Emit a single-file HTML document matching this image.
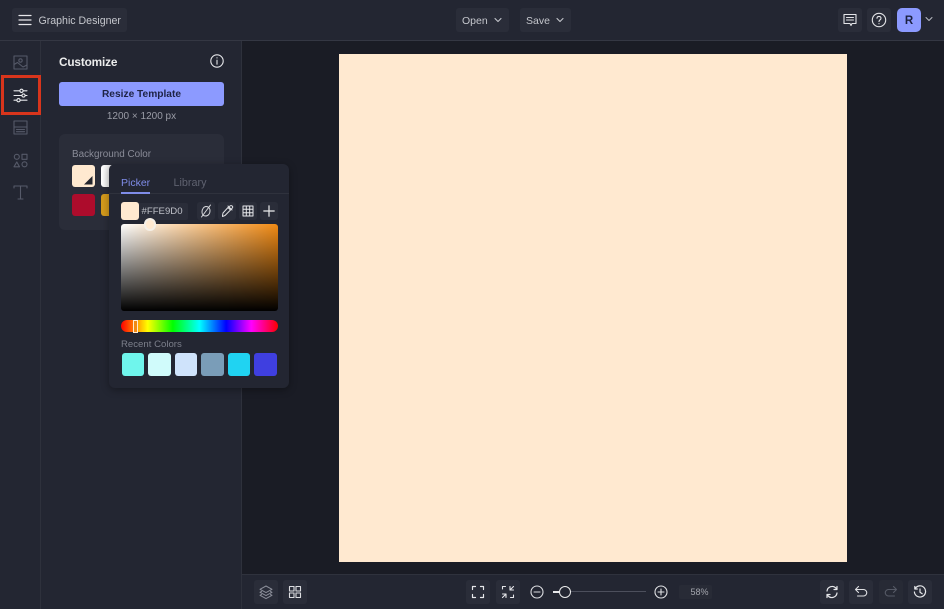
<!DOCTYPE html>
<html><head><meta charset="utf-8">
<style>
html,body{margin:0;padding:0;width:944px;height:609px;overflow:hidden;background:#1a1c25;font-family:"Liberation Sans","DejaVu Sans",sans-serif}
div,span,svg{position:absolute;box-sizing:border-box}
.t{white-space:nowrap;line-height:1}
.b{background:#2a2d39;border-radius:3px}
svg{fill:none;stroke-linecap:round;stroke-linejoin:round}
.sw{border-radius:3px}
</style></head><body>
<!-- bars -->
<div style="left:0;top:0;width:944px;height:41px;background:#232632;border-bottom:1px solid #343743"></div>
<div style="left:0;top:41px;width:41px;height:568px;background:#232632;border-right:1px solid #2e313c"></div>
<div style="left:41px;top:41px;width:201px;height:568px;background:#232632;border-right:1px solid #2e313c"></div>
<div style="left:242px;top:574px;width:702px;height:35px;background:#232632;border-top:1px solid #2f323d"></div>
<!-- canvas -->
<div style="left:338.5px;top:53.5px;width:508.5px;height:508.5px;background:#ffe9d0"></div>

<!-- top left -->
<div class="b" style="left:12px;top:8px;width:115px;height:24px"></div>
<svg style="left:17.5px;top:13px" width="14" height="14" viewBox="0 0 14 14" stroke="#e6e7ea" stroke-width="1.2"><path d="M1 2.5H13M1 7H13M1 11.5H13"/></svg>
<div class="t" style="left:38.5px;top:15.5px;font-size:10.6px;color:#c5c7cd">Graphic Designer</div>
<!-- top centre -->
<div class="b" style="left:456px;top:8px;width:53px;height:24px"></div>
<div class="t" style="left:462px;top:15.5px;font-size:10.5px;color:#c5c7cd">Open</div>
<svg style="left:494px;top:17px" width="8" height="6" viewBox="0 0 8 6" stroke="#c5c7cd" stroke-width="1.1"><path d="M1 1.5L4 4.5L7 1.5"/></svg>
<div class="b" style="left:520px;top:8px;width:51px;height:24px"></div>
<div class="t" style="left:526px;top:15.5px;font-size:10.5px;color:#c5c7cd">Save</div>
<svg style="left:556px;top:17px" width="8" height="6" viewBox="0 0 8 6" stroke="#c5c7cd" stroke-width="1.1"><path d="M1 1.5L4 4.5L7 1.5"/></svg>
<!-- top right -->
<div class="b" style="left:838px;top:8px;width:24px;height:24px"></div>
<svg style="left:842px;top:12px" width="16" height="16" viewBox="0 0 16 16" stroke="#e4e5e8" stroke-width="1.1"><path d="M2 2.5H14V11.5H10L9 13.5L8 11.5H2Z"/><path d="M4.5 5.5H11.5M4.5 8H11.5"/></svg>
<div class="b" style="left:867px;top:8px;width:24px;height:24px"></div>
<svg style="left:871px;top:12px" width="16" height="16" viewBox="0 0 16 16" stroke="#e4e5e8" stroke-width="1.1"><circle cx="8" cy="8" r="6.7"/><path d="M6 6.3C6 3.8 10 3.8 10 6.2C10 7.8 8 7.8 8 9.6M8 11.6V11.8"/></svg>
<div style="left:897px;top:8px;width:24px;height:24px;background:#8c9aff;border-radius:5px"></div>
<div class="t" style="left:897px;top:15.5px;width:24px;text-align:center;font-size:11.5px;font-weight:bold;color:#1c2140">R</div>
<svg style="left:925px;top:16px" width="8" height="6" viewBox="0 0 8 6" stroke="#b9bbc2" stroke-width="1"><path d="M1 1.5L4 4.5L7 1.5"/></svg>

<!-- rail -->
<svg style="left:13px;top:55px" width="15" height="15" viewBox="0 0 15 15" stroke="#565a69" stroke-width="1.1"><rect x="1" y="1" width="13" height="13"/><circle cx="7.5" cy="5.5" r="1.7"/><path d="M1 9.5L4.5 7.5L10 12L14 10"/></svg>
<div style="left:1px;top:75px;width:40px;height:40px;border:3px solid #d8351c"></div>
<svg style="left:13px;top:88px" width="15" height="15" viewBox="0 0 15 15" stroke="#e8e9ec" stroke-width="1.1"><path d="M1 2.8H14M1 7.5H14M1 12.2H14"/><circle cx="8.5" cy="2.8" r="1.6" fill="#232632"/><circle cx="10.5" cy="7.5" r="1.6" fill="#232632"/><circle cx="5.5" cy="12.2" r="1.6" fill="#232632"/></svg>
<svg style="left:13px;top:120px" width="15" height="15" viewBox="0 0 15 15" stroke="#565a69" stroke-width="1.1"><rect x="1" y="1" width="13" height="13"/><path d="M1 7H14M3.5 9.5H11.5M3.5 11.7H11.5"/></svg>
<svg style="left:13px;top:153px" width="15" height="15" viewBox="0 0 15 15" stroke="#565a69" stroke-width="1.1"><circle cx="3.8" cy="3.8" r="2.5"/><rect x="9" y="1.3" width="5" height="5"/><path d="M3.8 9L6.5 13.8H1Z"/><circle cx="11.5" cy="11.3" r="2.5"/></svg>
<svg style="left:12px;top:184px" width="17" height="17" viewBox="0 0 17 17" stroke="#565a69" stroke-width="1.1"><path d="M2 4V2H15V4M8.5 2V15M6 15H11"/></svg>

<!-- panel -->
<div class="t" style="left:59px;top:57px;font-size:11.8px;letter-spacing:-.15px;font-weight:bold;color:#eceded">Customize</div>
<svg style="left:210px;top:54px" width="14" height="14" viewBox="0 0 14 14" stroke="#e6e7ea" stroke-width="1.1"><circle cx="7" cy="7" r="6.2"/><path d="M7 6.2V10.2M7 3.8V4"/></svg>
<div style="left:59px;top:82px;width:165px;height:24px;background:#8c9aff;border-radius:3px"></div>
<div class="t" style="left:59px;top:90px;width:165px;text-align:center;font-size:10.2px;font-weight:bold;color:#1e2345">Resize Template</div>
<div class="t" style="left:59px;top:112px;width:165px;text-align:center;font-size:10px;color:#9a9ca6">1200 × 1200 px</div>
<div style="left:59px;top:134px;width:165px;height:96px;background:#2a2d39;border-radius:6px"></div>
<div class="t" style="left:72px;top:150px;font-size:9.9px;color:#8a8c98">Background Color</div>
<div class="sw" style="left:72px;top:165px;width:23px;height:22px;background:#ffe9d0"></div>
<svg style="left:83px;top:175px" width="10" height="10" viewBox="0 0 10 10"><path d="M1 9.5L9.5 1V9.5Z" fill="#24262e"/></svg>
<div class="sw" style="left:101px;top:165px;width:23px;height:22px;background:linear-gradient(90deg,#fff,#c9c9c9)"></div>
<div class="sw" style="left:72px;top:194px;width:23px;height:22px;background:#ad0c2c"></div>
<div class="sw" style="left:101px;top:194px;width:23px;height:22px;background:#d39a1c"></div>

<!-- popover -->
<div style="left:109px;top:164px;width:180px;height:224px;background:#232632;border-radius:6px;box-shadow:0 2px 8px rgba(0,0,0,.35)"></div>
<div style="left:109px;top:193px;width:180px;height:1px;background:#2f323d"></div>
<div class="t" style="left:121px;top:177.5px;font-size:10.5px;color:#7f8ce8">Picker</div>
<div style="left:121px;top:192px;width:29px;height:1.5px;background:#7f8ce8"></div>
<div class="t" style="left:173.5px;top:177.5px;font-size:10.8px;color:#5f6270">Library</div>
<div style="left:121px;top:203px;width:67px;height:17px;background:#2a2d39;border-radius:2px"></div>
<div class="sw" style="left:121px;top:202px;width:18px;height:18px;background:#ffe9d0"></div>
<div class="t" style="left:141.5px;top:207px;font-size:9.6px;color:#bfc1c8">#FFE9D0</div>
<div class="b" style="left:197px;top:202px;width:18px;height:18px"></div>
<svg style="left:199px;top:204px" width="14" height="14" viewBox="0 0 14 14" stroke="#d9dade" stroke-width="1"><path d="M7 2.5C10 2.5 11 5 11 7C11 10 9 12 6.5 12C4 12 3 10 3 8C3 5 5 2.5 7 2.5ZM2.5 13L11.5 1"/></svg>
<div class="b" style="left:218px;top:202px;width:18px;height:18px"></div>
<svg style="left:220px;top:204px" width="14" height="14" viewBox="0 0 14 14" stroke="#e0e1e4" stroke-width="1"><path d="M8 3.5L10.5 6L5 11.5L2.5 12.5L2.5 11.5L3 9ZM8 2L12 6M9.5 2.5C10.5 1 12.5 1.5 12.8 3C12.5 4 12 4.5 11.5 5"/></svg>
<div class="b" style="left:239px;top:202px;width:18px;height:18px"></div>
<svg style="left:241px;top:204px" width="14" height="14" viewBox="0 0 14 14" stroke="#e6e7ea" stroke-width="1"><rect x="2" y="2" width="10" height="10"/><path d="M5.3 2V12M8.7 2V12M2 5.3H12M2 8.7H12"/></svg>
<div class="b" style="left:260px;top:202px;width:18px;height:18px"></div>
<svg style="left:261.5px;top:204px" width="14" height="14" viewBox="0 0 14 14" stroke="#eceded" stroke-width="1.2"><path d="M7 1.8V12.2M1.8 7H12.2"/></svg>
<!-- gradient -->
<div style="left:121px;top:224px;width:156.5px;height:87px;border-radius:3px;background:linear-gradient(180deg,rgba(0,0,0,0) 0%,#000 100%),linear-gradient(90deg,#fff 0%,#f08a14 100%)"></div>
<div style="left:143.5px;top:218px;width:12.5px;height:12.5px;border-radius:50%;background:#ffe9d0;border:2px solid #f5efe6"></div>
<!-- hue -->
<div style="left:121px;top:320px;width:156.5px;height:12px;border-radius:6px;background:linear-gradient(90deg,#f00 0%,#ff0 17%,#0f0 33%,#0ff 50%,#00f 67%,#f0f 83%,#f00 100%)"></div>
<div style="left:133px;top:319.5px;width:5px;height:13px;background:#f08a14;border:1px solid #ffe9d0"></div>
<div class="t" style="left:121px;top:339.5px;font-size:9.6px;color:#7c7f8b">Recent Colors</div>
<div class="sw" style="left:122px;top:353px;width:22px;height:23px;background:#6ff5ec"></div>
<div class="sw" style="left:148px;top:353px;width:23px;height:23px;background:#d0fbfb"></div>
<div class="sw" style="left:175px;top:353px;width:22px;height:23px;background:#cfe3fb"></div>
<div class="sw" style="left:201px;top:353px;width:23px;height:23px;background:#7a9db8"></div>
<div class="sw" style="left:228px;top:353px;width:22px;height:23px;background:#20d3f2"></div>
<div class="sw" style="left:254px;top:353px;width:23px;height:23px;background:#3f3fe0"></div>

<!-- bottom -->
<div class="b" style="left:254px;top:580px;width:24px;height:24px"></div>
<svg style="left:258px;top:584px" width="16" height="16" viewBox="0 0 16 16" stroke="#8b8e99" stroke-width="1"><path d="M8 2L14 5.3L8 8.6L2 5.3ZM3.5 7.5L2 8.3L8 11.6L14 8.3L12.5 7.5M3.5 10.5L2 11.3L8 14.6L14 11.3L12.5 10.5"/></svg>
<div class="b" style="left:283px;top:580px;width:24px;height:24px"></div>
<svg style="left:288px;top:585px" width="14" height="14" viewBox="0 0 14 14" stroke="#dcdde1" stroke-width="1.1"><rect x="1.5" y="1.5" width="4.5" height="4.5"/><rect x="8" y="1.5" width="4.5" height="4.5"/><rect x="1.5" y="8" width="4.5" height="4.5"/><rect x="8" y="8" width="4.5" height="4.5"/></svg>
<div class="b" style="left:466px;top:580px;width:24px;height:24px"></div>
<svg style="left:471px;top:585px" width="14" height="14" viewBox="0 0 14 14" stroke="#e6e7ea" stroke-width="1.2"><path d="M1.5 4.5V1.5H4.5M9.5 1.5H12.5V4.5M12.5 9.5V12.5H9.5M4.5 12.5H1.5V9.5"/></svg>
<div class="b" style="left:496px;top:580px;width:24px;height:24px"></div>
<svg style="left:501px;top:585px" width="14" height="14" viewBox="0 0 14 14" stroke="#e6e7ea" stroke-width="1.1"><path d="M1.5 4V1.5H4.5M12.5 10V12.5H9.5M9 1.5V5H12.5M9 5L12.5 1.5M5 12.5V9H1.5M5 9L1.5 12.5"/></svg>
<svg style="left:530px;top:585px" width="14" height="14" viewBox="0 0 14 14" stroke="#dcdde1" stroke-width="1.1"><circle cx="7" cy="7" r="6"/><path d="M4 7H10"/></svg>
<div style="left:553px;top:591px;width:93px;height:1px;background:#4c4f5c"></div>
<div style="left:553px;top:591px;width:10px;height:1.5px;background:#e6e7ea"></div>
<div style="left:559px;top:586px;width:12px;height:12px;border-radius:50%;background:#232632;border:1.5px solid #eceded"></div>
<svg style="left:654px;top:585px" width="14" height="14" viewBox="0 0 14 14" stroke="#e0e1e4" stroke-width="1.1"><circle cx="7" cy="7" r="6"/><path d="M4 7H10M7 4V10"/></svg>
<div style="left:679px;top:585px;width:33px;height:14px;background:#282b36;border-radius:2px"></div>
<div class="t" style="left:690.5px;top:587.5px;font-size:9px;color:#a4a6ae">58%</div>
<div class="b" style="left:820px;top:580px;width:24px;height:24px"></div>
<svg style="left:825px;top:585px" width="14" height="14" viewBox="0 0 14 14" stroke="#e6e7ea" stroke-width="1.2"><path d="M2 6A5.2 5.2 0 0 1 11 3.2L12 4.5M12 1.5V4.5H9M12 8A5.2 5.2 0 0 1 3 10.8L2 9.5M2 12.5V9.5H5"/></svg>
<div class="b" style="left:849px;top:580px;width:24px;height:24px"></div>
<svg style="left:854px;top:585px" width="14" height="14" viewBox="0 0 14 14" stroke="#e0e1e4" stroke-width="1.1"><path d="M4.5 1.5L1.5 4.5L4.5 7.5M1.5 4.5H9.5A3.2 3.2 0 0 1 9.5 11H3.5"/></svg>
<div class="b" style="left:879px;top:580px;width:24px;height:24px;background:#272a35"></div>
<svg style="left:884px;top:585px" width="14" height="14" viewBox="0 0 14 14" stroke="#565a66" stroke-width="1.1"><path d="M9.5 1.5L12.5 4.5L9.5 7.5M12.5 4.5H4.5A3.2 3.2 0 0 0 4.5 11H10.5"/></svg>
<div class="b" style="left:908px;top:580px;width:24px;height:24px"></div>
<svg style="left:913px;top:585px" width="14" height="14" viewBox="0 0 14 14" stroke="#e6e7ea" stroke-width="1.2"><path d="M2.2 3.5A5.6 5.6 0 1 1 1.4 7M1.8 1.5V4H4.3M7 4V7.3L9.2 8.7"/></svg>
</body></html>
